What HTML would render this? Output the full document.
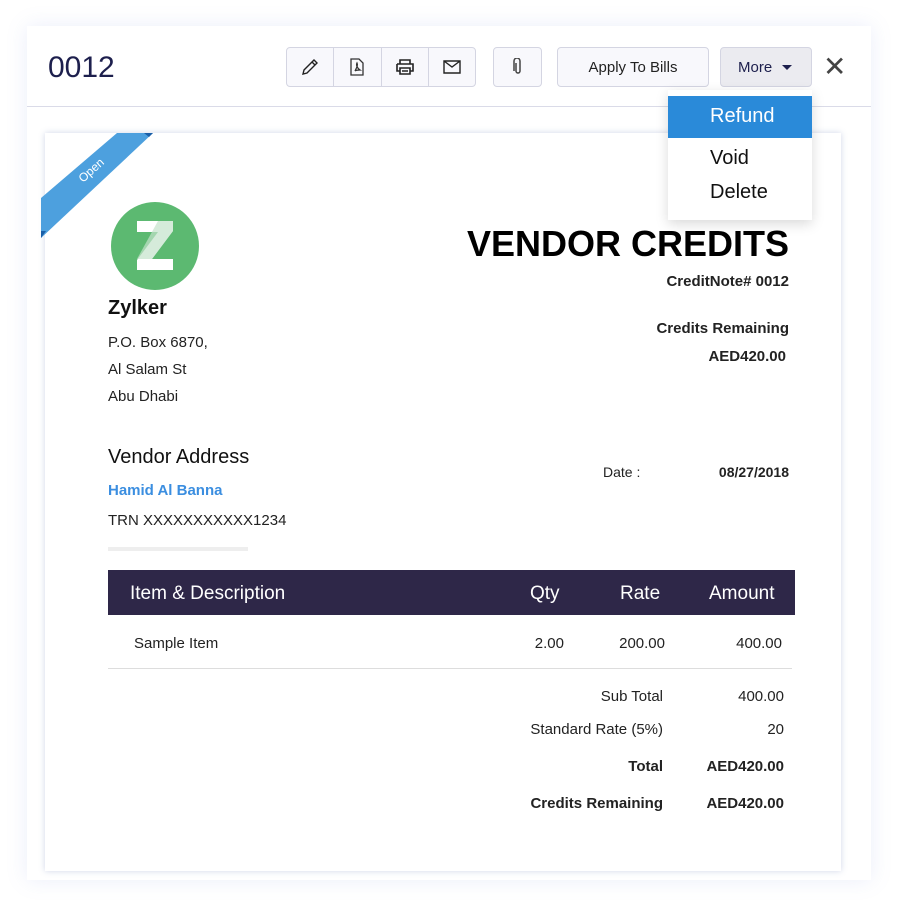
<!DOCTYPE html>
<html><head><meta charset="utf-8"><style>
*{box-sizing:border-box;margin:0;padding:0}
body{width:897px;height:907px;background:#fff;font-family:"Liberation Sans",sans-serif;position:relative;overflow:hidden;color:#222}
.panel{position:absolute;left:27px;top:26px;width:844px;height:854px;background:#fff;box-shadow:0 0 20px rgba(120,140,220,.15)}
.hline{position:absolute;left:27px;top:106px;width:844px;height:1px;background:#dadbe8}
.title{position:absolute;left:48px;top:51px;font-size:30px;color:#1d1f4d}
.btn{position:absolute;top:47px;height:40px;border:1px solid #d4d5e2;border-radius:4px;background:#f8f8fc;display:flex;align-items:center;justify-content:center;font-size:15px;color:#222}
.grp{position:absolute;left:286px;top:47px;width:190px;height:40px;border:1px solid #d4d5e2;border-radius:4px;background:#f8f8fc;display:flex}
.grp div{flex:1;border-right:1px solid #d4d5e2;display:flex;align-items:center;justify-content:center}
.grp div:last-child{border-right:none}
.card{position:absolute;left:45px;top:133px;width:796px;height:738px;background:#fff;box-shadow:0 0 6px rgba(100,120,180,.3)}
.abs{position:absolute}
.menu{position:absolute;left:668px;top:90px;width:144px;height:130px;background:#fff;box-shadow:0 4px 12px rgba(0,0,0,.15)}
.r{text-align:right}
</style></head><body>
<div class="panel"></div>
<div class="hline"></div>
<div class="title">0012</div>
<div class="grp">
<div><svg width="20" height="20" viewBox="0 0 20 20" fill="none" stroke="#222" stroke-width="1.4"><path d="M3 17l1-4L14 3l3 3L7 16z M12 5l3 3"/></svg></div>
<div><svg width="16" height="18" viewBox="0 0 16 18" fill="none" stroke="#333" stroke-width="1.3"><path d="M2 1h8l4 4v12H2z M6 13c2-4 3-6 2-8c-1 2 0 5 3 7c-2 0-4 0-5 1"/></svg></div>
<div><svg width="20" height="18" viewBox="0 0 20 18" fill="none" stroke="#222" stroke-width="1.6"><path d="M5 6V2h10v4 M2 6h16v7h-3 M5 13H2V6 M5 10h10v6H5z M7 13h6"/></svg></div>
<div><svg width="18" height="14" viewBox="0 0 18 14" fill="none" stroke="#222" stroke-width="1.4"><path d="M1 1h16v12H1z M1 1l8 6l8-6"/></svg></div>
</div>
<div class="btn" style="left:493px;width:49px"><svg width="10" height="18" viewBox="0 0 10 18" fill="none" stroke="#444" stroke-width="1.5"><path d="M3 5v8a2 2 0 0 0 4 0V3a3 3 0 0 0-6 0v10"/></svg></div>
<div class="btn" style="left:557px;width:152px">Apply To Bills</div>
<div class="btn" style="left:720px;width:92px;background:#ebebf0;color:#1d1f4d;justify-content:flex-start;padding-left:17px">More <span style="margin-left:10px;border-left:5px solid transparent;border-right:5px solid transparent;border-top:5px solid #1d1f4d;display:inline-block"></span></div>
<div class="abs" style="left:823px;top:54px;font-size:28px;color:#444;line-height:26px">✕</div>

<div class="card">
<svg class="abs" style="left:-4px;top:-5px" width="115" height="115"><polygon points="0,70 76,5 112,5 0,110" fill="#4da0de"/><polygon points="103,5 112,5 108,9" fill="#1a5fa8"/><polygon points="0,103 5,103 0,110" fill="#1a5fa8"/><text x="42" y="55" fill="#fff" font-size="12" font-family="Liberation Sans" transform="rotate(-42 42 55)">Open</text></svg>
<svg class="abs" style="left:65px;top:68px" width="90" height="90"><circle cx="45" cy="45" r="44" fill="#5cb971"/><path d="M27 20H63V30L42 58H63V69H27V59L48 31H27Z" fill="#fff"/><path d="M48 20H63V30L42 58H27" fill="#c3e3cb" opacity=".7"/></svg>
<div class="abs" style="left:63px;top:164px;font-size:20px;font-weight:bold;color:#111">Zylker</div>
<div class="abs" style="left:63px;top:196px;font-size:15px;line-height:27px;color:#222">P.O. Box 6870,<br>Al Salam St<br>Abu Dhabi</div>
<div class="abs r" style="right:52px;top:90px;font-size:36px;font-weight:bold;color:#000">VENDOR CREDITS</div>
<div class="abs r" style="right:52px;top:140px;font-size:15px;font-weight:bold">CreditNote# 0012</div>
<div class="abs r" style="right:52px;top:187px;font-size:15px;font-weight:bold">Credits Remaining</div>
<div class="abs r" style="right:55px;top:215px;font-size:15px;font-weight:bold">AED420.00</div>
<div class="abs" style="left:63px;top:313px;font-size:20px;color:#111">Vendor Address</div>
<div class="abs" style="left:63px;top:349px;font-size:15px;font-weight:bold;color:#3b8ee0">Hamid Al Banna</div>
<div class="abs" style="left:63px;top:379px;font-size:15px">TRN XXXXXXXXXXX1234</div>
<div class="abs" style="left:63px;top:414px;width:140px;height:4px;background:#eee"></div>
<div class="abs" style="left:558px;top:331px;font-size:14px">Date :</div>
<div class="abs r" style="right:52px;top:331px;font-size:14px;font-weight:bold">08/27/2018</div>
<div class="abs" style="left:63px;top:437px;width:687px;height:45px;background:#2e2748;color:#fff;font-size:19px">
<span class="abs" style="left:22px;top:13px">Item &amp; Description</span>
<span class="abs" style="left:422px;top:13px">Qty</span>
<span class="abs" style="left:512px;top:13px">Rate</span>
<span class="abs" style="left:601px;top:13px">Amount</span></div>
<div class="abs" style="left:89px;top:502px;font-size:15px">Sample Item</div>
<div class="abs r" style="right:277px;top:502px;font-size:15px">2.00</div>
<div class="abs r" style="right:176px;top:502px;font-size:15px">200.00</div>
<div class="abs r" style="right:59px;top:502px;font-size:15px">400.00</div>
<div class="abs" style="left:63px;top:535px;width:684px;height:1px;background:#ddd"></div>
<div class="abs r" style="right:178px;top:555px;font-size:15px">Sub Total</div>
<div class="abs r" style="right:57px;top:555px;font-size:15px">400.00</div>
<div class="abs r" style="right:178px;top:588px;font-size:15px">Standard Rate (5%)</div>
<div class="abs r" style="right:57px;top:588px;font-size:15px">20</div>
<div class="abs r" style="right:178px;top:625px;font-size:15px;font-weight:bold">Total</div>
<div class="abs r" style="right:57px;top:625px;font-size:15px;font-weight:bold">AED420.00</div>
<div class="abs r" style="right:178px;top:662px;font-size:15px;font-weight:bold">Credits Remaining</div>
<div class="abs r" style="right:57px;top:662px;font-size:15px;font-weight:bold">AED420.00</div>
</div>

<div class="menu">
<div class="abs" style="left:0;top:6px;width:144px;height:42px;background:#2a8ad9"></div>
<div class="abs" style="left:42px;top:15px;font-size:20px;color:#fff">Refund</div>
<div class="abs" style="left:42px;top:57px;font-size:20px;color:#111">Void</div>
<div class="abs" style="left:42px;top:91px;font-size:20px;color:#111">Delete</div>
</div>
</body></html>
